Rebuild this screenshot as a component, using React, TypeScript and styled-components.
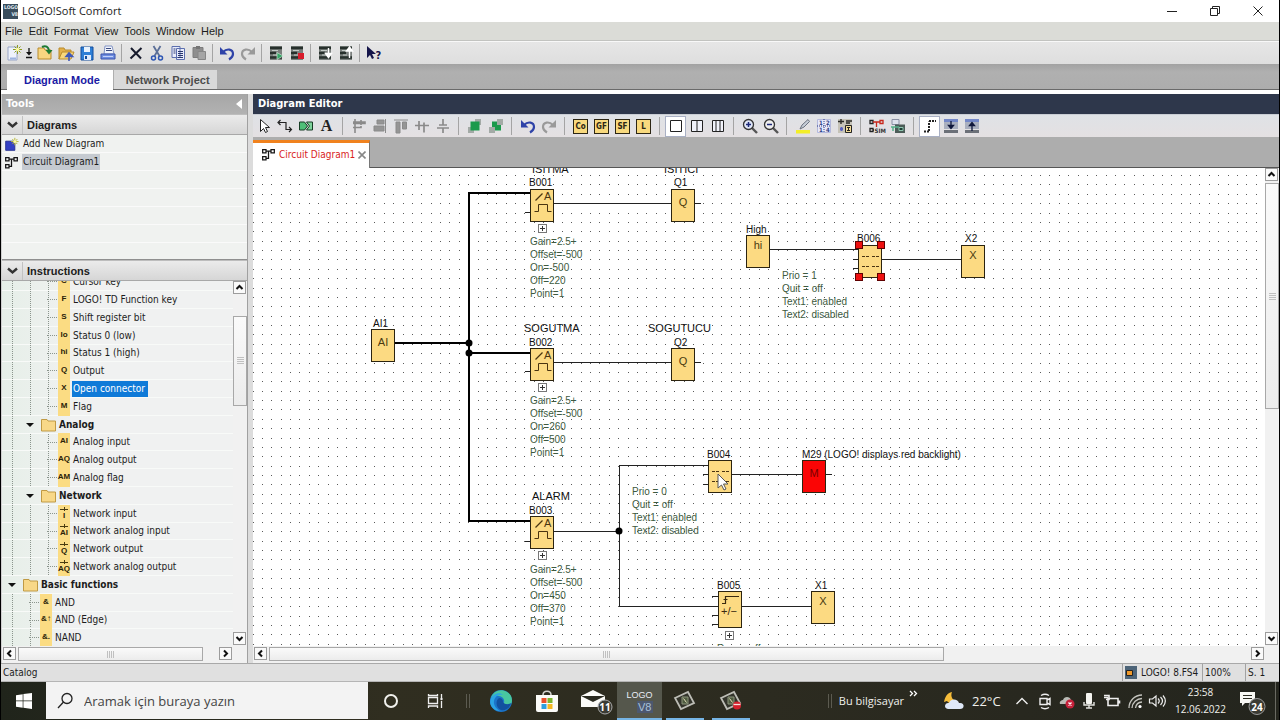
import React from 'react';
import styled, { createGlobalStyle, css } from 'styled-components';

const ui = '"DejaVu Sans Condensed", "DejaVu Sans", sans-serif';
const arial = '"Liberation Sans", Arial, sans-serif';
const segoe = '"Open Sans", "Noto Sans", sans-serif';

const GlobalStyle = createGlobalStyle`
  *, *::before, *::after { box-sizing: border-box; }
  body { margin: 0; background: #000; color: #1c1c1c; font-family: ${ui}; font-size: 10px; }
  button { margin: 0; padding: 0; border: 0; background: none; color: inherit; font: inherit; }
  ul { margin: 0; padding: 0; list-style: none; }
  svg { display: block; flex: none; }
`;

const Screen = styled.div`
  display: flex;
  flex-direction: column;
  height: 100vh;
  min-height: 480px;
  overflow: hidden;
`;

const AppWindow = styled.main`
  flex: 1;
  min-height: 0;
  display: flex;
  flex-direction: column;
  margin: 0 1px;
  background: #f2f2f2;
`;

const TitleBar = styled.header`
  display: flex;
  align-items: center;
  height: 22px;
  flex: none;
  padding-left: 2px;
  gap: 4px;
  background: #fff;
  font: 11px/20px ${segoe};
`;

const Caption = styled.h1`
  flex: 1;
  margin: 0;
  font-size: 11px;
  font-weight: 400;
`;

const WindowButtons = styled.div`
  display: flex;
`;

const WindowButton = styled.button`
  display: grid;
  place-items: center;
  width: 43px;
  height: 20px;
`;

const MenuBar = styled.nav`
  display: flex;
  align-items: center;
  gap: 6px;
  height: 19px;
  flex: none;
  padding-left: 4px;
  background: #dbdcd7;
  border-bottom: 1px solid #c2c3c0;
  font: 11px/16px ${arial};
`;

const Toolbar = styled.div<{ $sep: number }>`
  display: flex;
  align-items: center;
  height: 23px;
  flex: none;
  padding-left: 2px;
  background: linear-gradient(#e6e6e6, #dedede);
  border-top: 1px solid #f8f8f8;
  --sep: ${(p) => p.$sep}px;
`;

const EditorToolbar = styled(Toolbar)`
  padding-left: 0;
  background: linear-gradient(#dfe2e6, #e4e0e2);
  border-top: 1px solid #c9cdd4;
`;

const ToolButton = styled.button<{ $narrow?: boolean; $on?: boolean }>`
  display: grid;
  place-items: center;
  width: ${(p) => (p.$narrow ? 10 : 21)}px;
  height: 21px;
  flex: none;
  ${(p) => p.$on && css`background: #fff; border: 1px solid #a9b0c4;`}
`;

const Separator = styled.span`
  width: var(--sep);
  height: 18px;
  flex: none;
  background: linear-gradient(#a4a4a4, #a4a4a4) center / 1px 100% no-repeat;
`;

const ModeBar = styled.div`
  display: flex;
  align-items: flex-end;
  gap: 1px;
  height: 26px;
  flex: none;
  padding-left: 6px;
  background: linear-gradient(#a2a2a2, #b0b0b0 8px, #adadad);
  border-bottom: 1px solid #6a6a6a;
`;

const ModeTab = styled.button<{ $on?: boolean }>`
  height: ${(p) => (p.$on ? 20 : 19)}px;
  margin-bottom: ${(p) => (p.$on ? -1 : 0)}px;
  padding: 0 ${(p) => (p.$on ? 13 : 7)}px 0 ${(p) => (p.$on ? 17 : 12)}px;
  background: ${(p) => (p.$on ? '#fff' : '#d9d9d9')};
  color: ${(p) => (p.$on ? '#1a1aa4' : '#4c4c4c')};
  font: bold 11px/18px ${arial};
`;

const Work = styled.div`
  flex: 1;
  min-height: 0;
  display: flex;
  gap: 5px;
  padding-top: 4px;
  background: linear-gradient(#fff 4px, #dcdcdc 4px);
`;

const Side = styled.aside`
  display: flex;
  flex-direction: column;
  width: 247px;
  flex: none;
  border-right: 1px solid #a0a0a0;
  border-left: 1px solid #d0d0d0;
`;

const PanelTitle = styled.h2<{ $dark?: boolean }>`
  display: flex;
  align-items: center;
  justify-content: space-between;
  height: 20px;
  flex: none;
  margin: 0;
  padding: 0 5px 0 ${(p) => (p.$dark ? 5 : 4)}px;
  background: ${(p) => (p.$dark ? '#2e374b' : 'linear-gradient(#a6a6a6, #b2b2b2)')};
  color: #fff;
  font: bold 11px/20px ${ui};
`;

const SectionTitle = styled.h3`
  display: flex;
  align-items: center;
  height: 21px;
  flex: none;
  margin: 0;
  background: linear-gradient(#ebebeb, #d6d6d6);
  border-top: 1px solid #bdbdbd;
  border-bottom: 1px solid #a8a8a8;
  font: bold 11px/18px ${arial};
  svg { margin: 0 3px 0 4px; }
  span { padding-left: 4px; border-left: 1px solid #c2c2c2; }
`;

const DiagramList = styled.ul`
  height: 125px;
  flex: none;
  background: repeating-linear-gradient(#f0f2f0 0 17px, #fafafa 17px 18px);
  border-bottom: 1px solid #8f8f8f;
`;

const DiagramItem = styled.li<{ $on?: boolean }>`
  display: flex;
  align-items: center;
  gap: 3px;
  height: 18px;
  padding-left: 2px;
  span {
    padding: 0 1px;
    line-height: 16px;
    background: ${(p) => (p.$on ? '#c5cad0' : 'transparent')};
  }
`;

const TreeArea = styled.div`
  flex: 1;
  min-height: 0;
  display: flex;
`;

const TreeClip = styled.div`
  flex: 1;
  overflow: hidden;
  background: linear-gradient(90deg, #e6efe8, #f0f1f1 70px);
`;

const Tree = styled.ul`
  margin-top: -8px;
`;

/* Every fifth row is one pixel shorter, as in a list scaled below 100 %. */
const TreeRow = styled.li<{ $depth: number; $bold?: boolean }>`
  display: flex;
  align-items: center;
  height: 18px;
  padding-left: ${(p) => p.$depth * 18 + 2}px;
  border-bottom: 1px solid #f8faf8;
  font-weight: ${(p) => (p.$bold ? 700 : 400)};
  white-space: nowrap;
  background: ${(p) => [1, 2, 3].filter((n) => n <= p.$depth).map((n) =>
    `repeating-linear-gradient(#8b958d 0 1px, #0000 1px 2px) ${n * 18 - 8}px 0 / 1px 100% no-repeat`).join(',') || 'none'};
  &:nth-child(5n) { height: 17px; }
`;

const Branch = styled.span`
  width: 10px;
  margin-left: -11px;
  margin-right: 1px;
  border-top: 1px dotted #8b958d;
`;

const Chip = styled.span<{ $low?: boolean }>`
  width: 12px;
  height: 18px;
  flex: none;
  margin-right: 2px;
  background: #fbdc83;
  color: #2a2208;
  font: bold 8px/${(p) => (p.$low ? 22 : 16)}px ${arial};
  text-align: center;
  display: flex;
  justify-content: center;
  position: relative;
  ${(p) => p.$low && css`
    &::before { content: ''; position: absolute; left: 2px; right: 2px; top: 4px; border-top: 1px solid #4a3c10; }
    &::after { content: ''; position: absolute; left: 6px; top: 2px; height: 4px; border-left: 1px solid #4a3c10; }
  `}
`;

const RowText = styled.span<{ $on?: boolean; $folder?: boolean }>`
  padding: 0 3px 0 1px;
  line-height: 16px;
  background: ${(p) => (p.$on ? '#0f7ad8' : 'transparent')};
  color: ${(p) => (p.$on ? '#fff' : 'inherit')};
`;

const Scroll = styled.div<{ $v?: boolean }>`
  display: flex;
  flex: none;
  flex-direction: ${(p) => (p.$v ? 'column' : 'row')};
  ${(p) => (p.$v ? 'width: 14px; padding: 0 0 1px;' : 'height: 17px; padding: 1px 15px 2px 1px;')}
  gap: 2px;
  background: #f1f1f1;
`;

const ScrollButton = styled.button`
  display: grid;
  place-items: center;
  width: 13px;
  height: 13px;
  flex: none;
  background: #fafafa;
  border: 1px solid #9c9c9c;
`;

const Track = styled.div<{ $v?: boolean }>`
  flex: 1;
  display: flex;
  flex-direction: ${(p) => (p.$v ? 'column' : 'row')};
`;

const Space = styled.span<{ $grow: number }>`
  flex: ${(p) => p.$grow} 0 0;
`;

const Thumb = styled.div<{ $grow: number }>`
  flex: ${(p) => p.$grow} 0 0;
  display: grid;
  place-items: center;
  background: linear-gradient(#fafafa, #ececec);
  border: 1px solid #a8a8a8;
`;

const Grip = styled.span<{ $v?: boolean }>`
  width: 7px;
  height: 7px;
  background: repeating-linear-gradient(${(p) => (p.$v ? '180deg' : '90deg')}, #c0c0c0 0 1px, #0000 1px 2px);
`;

const Editor = styled.section`
  flex: 1;
  min-width: 0;
  display: flex;
  flex-direction: column;
`;

const FileTabs = styled.div`
  display: flex;
  align-items: flex-end;
  height: 31px;
  flex: none;
  background: #adadad;
  border-bottom: 1px solid #555;
`;

const FileTab = styled.button`
  display: flex;
  align-items: center;
  height: 28px;
  margin-bottom: -1px;
  padding: 0 3px 2px 8px;
  gap: 3px;
  background: #fff;
  border-top: 3px solid #f0821e;
  border-right: 1px solid #777;
  color: #d9221c;
`;

const CanvasArea = styled.div`
  flex: 1;
  min-height: 0;
  display: flex;
`;

const Canvas = styled.div`
  position: relative;
  flex: 1;
  min-width: 0;
  overflow: hidden;
  background: #fff;
  color: #111;
  font: 10px/13px ${arial};
`;

const Wires = styled.svg`
  position: absolute;
  left: 0;
  top: 0;
`;

const At = styled.div<{ $x: number; $y: number }>`
  position: absolute;
  left: ${(p) => p.$x}px;
  top: ${(p) => p.$y}px;
  white-space: nowrap;
`;

const Block = styled(At)<{ $red?: boolean; $high?: boolean; $h?: number }>`
  width: 24px;
  height: ${(p) => p.$h ?? 33}px;
  border: 1px solid #2c2410;
  background: ${(p) => (p.$red ? '#fb0505' : '#fcda82')};
  color: ${(p) => (p.$red ? '#7a0000' : '#4a3a10')};
  font-size: 11px;
  line-height: ${(p) => (p.$high ? 18 : 24)}px;
  text-align: center;
`;

const Comment = styled(At)`
  font-size: 11px;
`;

const Params = styled(At)`
  color: #3d5a40;
`;

const PlusBox = styled(At).attrs({ as: 'button' })`
  display: grid;
  place-items: center;
  width: 9px;
  height: 9px;
  background: #fff;
  border: 1px solid #777;
`;

const Handle = styled(At)`
  width: 8px;
  height: 8px;
  background: #ee1010;
  border: 1px solid #5e0000;
`;

const StatusBar = styled.footer`
  display: flex;
  align-items: center;
  height: 19px;
  flex: none;
  padding-left: 2px;
  background: #e0e0e0;
  border-top: 1px solid #a9a9a9;
  border-bottom: 1px solid #b5b5b5;
`;

const StatusText = styled.span`
  flex: 1;
`;

const StatusCell = styled.span<{ $w: number }>`
  display: flex;
  align-items: center;
  gap: 4px;
  width: ${(p) => p.$w}px;
  height: 17px;
  padding-left: 2px;
  border-left: 1px solid #a2a2a2;
  white-space: nowrap;
`;

const Taskbar = styled.footer`
  display: flex;
  height: 38px;
  flex: none;
  margin: 0 1px;
  background: linear-gradient(90deg, #20241b, #302e20 30%, #2c2b20 60%, #24251e);
  color: #f0f0ec;
  font: 12px/16px ${segoe};
`;

const TaskButton = styled.button<{ $w?: number; $open?: boolean; $on?: boolean }>`
  position: relative;
  display: grid;
  place-items: center;
  width: ${(p) => p.$w ?? 46}px;
  flex: none;
  ${(p) => p.$on && css`background: #55574c;`}
  &::after {
    content: '';
    position: absolute;
    left: ${(p) => (p.$on ? 0 : 4)}px;
    right: ${(p) => (p.$on ? 0 : 4)}px;
    bottom: 0;
    height: ${(p) => (p.$open ? 2 : 0)}px;
    background: #76b5e6;
  }
`;

const SearchBox = styled.label`
  display: flex;
  align-items: center;
  gap: 10px;
  width: 322px;
  height: 37px;
  flex: none;
  padding-left: 10px;
  background: #f3f3f3;
  input {
    flex: 1;
    min-width: 0;
    border: 0;
    padding: 0;
    outline: 0;
    background: none;
    font: 13px/20px ${segoe};
  }
  input::placeholder { color: #444; opacity: 1; }
`;

const TaskDivider = styled.span<{ $w: number }>`
  width: ${(p) => p.$w}px;
  flex: none;
  background:
    linear-gradient(#5c5b50, #5c5b50) calc(50% - 1px) center / 1px 14px no-repeat,
    linear-gradient(#5c5b50, #5c5b50) calc(50% + 2px) center / 1px 14px no-repeat;
`;

const ShowDesktop = styled.button`
  width: 4px;
  flex: none;
  border-left: 1px solid #6a6a62;
`;

const Grow = styled.span`
  flex: 1;
`;

const Gap = styled.span`
  width: 15px;
  flex: none;
`;

const TaskLabel = styled.span<{ $w: number; $size: number }>`
  width: ${(p) => p.$w}px;
  flex: none;
  align-self: center;
  font-size: ${(p) => p.$size}px;
  white-space: nowrap;
`;

const Clock = styled.time`
  display: flex;
  flex-direction: column;
  justify-content: center;
  width: 65px;
  flex: none;
  font-size: 10px;
  line-height: 17px;
  text-align: center;
`;

const AppBadge = styled.span`
  display: flex;
  flex-direction: column;
  width: 15px;
  height: 15px;
  flex: none;
  background: #3a4d5c;
  color: #dfe8f0;
  font: bold 5px/7px ${ui};
  text-align: right;
`;

const LogoMark = styled.span`
  display: flex;
  flex-direction: column;
  align-items: flex-end;
  gap: 1px;
  color: #e8eef6;
  font: 9px/10px ${arial};
  em {
    padding: 0 1px;
    background: #4c5870;
    color: #a9c0d8;
    font-style: normal;
    font-size: 11px;
    line-height: 12px;
  }
`;

type IconProps = { size?: number; children: React.ReactNode };
const Svg = ({ size = 18, children }: IconProps) => (
  <svg width={size} height={size} viewBox="0 0 18 18" fill="none" aria-hidden="true">{children}</svg>
);

const moduleRack = (
  <>
    <path d="M3 2h12v14H3z" fill="#7b807e" />
    <path d="M3 4h12M3 9h6M3 13.500h12" stroke="#27302c" strokeWidth="2.400" />
    <path d="M5 6.500h6M6 11h4" stroke="#c3cac6" />
  </>
);

const circuit = (
  <path d="M2 3h4v4H2zM2 11.500h4v4H2zM12 3h4v4h-4zM6 5h6M9 5v8.500H6" stroke="#151515" strokeWidth="1.500" />
);

const icons: Record<string, React.ReactNode> = {
  new: (
    <>
      <path d="M3 3h9v13H3z" fill="#eef2fb" stroke="#98a5c8" />
      <path d="M5 14.500h6" stroke="#9db3e0" strokeWidth="2" />
      <path d="M12.500 1v9M8 5.500h9M9.500 2.500l6 6M15.500 2.500l-6 6" stroke="#8c9a1c" />
      <circle cx="12.500" cy="5.500" r="1.800" fill="#fdfba0" />
    </>
  ),
  open: (
    <>
      <path d="M2 4h6l1 2h6v9H2z" fill="#f7d680" stroke="#b98b2c" />
      <path d="M6 3c4-2 6 0 7 3" stroke="#1c7a34" strokeWidth="2" />
      <path d="M9.500 6h7L13 10.500z" fill="#1c7a34" />
    </>
  ),
  folder: (
    <>
      <path d="M2 4h5l1 2h6v3H5l-3 6z" fill="#e4b04a" stroke="#b98b2c" />
      <path d="M2 15l3-7h12l-3 7z" fill="#f8d77c" stroke="#b98b2c" />
      <path d="M12 17v-5M9 12.500L12 9l3.500 3.500z" stroke="#4159b8" strokeWidth="1.600" fill="#4159b8" />
    </>
  ),
  save: (
    <>
      <path d="M3 3h12v13H3z" fill="#2e7fd6" stroke="#134d9c" />
      <path d="M6 3h6v5H6z" fill="#e8f2fd" />
      <path d="M6 11h7v5H6z" fill="#dfeafa" />
      <path d="M7 12h2v3H7z" fill="#134d9c" />
    </>
  ),
  print: (
    <>
      <path d="M6 2h7l2 8H5z" fill="#f2f5fc" stroke="#8294c4" />
      <path d="M7 4.500h5M7 6.500h6" stroke="#3a4a80" />
      <path d="M2 10h14v5H2z" fill="#6f8ee0" stroke="#3b53ac" />
      <path d="M4 12.500h10" stroke="#c3d1fa" />
    </>
  ),
  del: <path d="M4 4l10 10.500M14.500 4L3.500 14.500" stroke="#161a2c" strokeWidth="2" />,
  cut: (
    <>
      <path d="M5.500 2l6 10M12.500 2l-6 10" stroke="#5b6f98" strokeWidth="1.800" />
      <circle cx="5.500" cy="14" r="2" stroke="#2d56b4" strokeWidth="1.500" />
      <circle cx="12.500" cy="14" r="2" stroke="#2d56b4" strokeWidth="1.500" />
    </>
  ),
  copy: (
    <>
      <path d="M3 2.500h8v11H3zM7.500 4.500h8v11h-8z" fill="#e8ecfb" stroke="#5c6fae" />
      <path d="M4.500 5h2M4.500 7h2M4.500 9h2M9 7.500h5M9 9.500h5M9 11.500h5M9 13.500h5" stroke="#28366e" />
    </>
  ),
  paste: (
    <>
      <path d="M3 3.500h10v10H3z" fill="#8e8e8e" stroke="#7c7c7c" />
      <path d="M6 2h4v3H6z" fill="#757575" />
      <path d="M8 7.500h7.500v8H8z" fill="#a5a5a5" stroke="#868686" />
    </>
  ),
  undo: (
    <>
      <path d="M5 8c4-4 10-3 10 2 0 2-1.500 4-4 5.500" stroke="#2f43a8" strokeWidth="2.200" />
      <path d="M2 3v7.500h7.500z" fill="#2f43a8" />
    </>
  ),
  redo: (
    <>
      <path d="M13 8C9 4 3 5 3 10c0 2 1.500 4 4 5.500" stroke="#9a9a9a" strokeWidth="2.200" />
      <path d="M16 3v7.500H8.500z" fill="#9a9a9a" />
    </>
  ),
  start: <>{moduleRack}<path d="M10 8.500l6 3.500-6 3.500z" fill="#35a565" stroke="#dff0e4" strokeWidth=".6" /></>,
  stop: <>{moduleRack}<path d="M10 9h6v6h-6z" fill="#d81c2c" /></>,
  download: <>{moduleRack}<path d="M12.500 4v7M9.500 9.500h6l-3 4z" stroke="#fff" strokeWidth="1.400" fill="#fff" /></>,
  upload: <>{moduleRack}<path d="M12.500 14V6M9.500 7h6l-3-4z" stroke="#fff" strokeWidth="1.400" fill="#fff" /></>,
  help: (
    <>
      <path d="M2 2v12l3-3 2 4 2-1-2-4h4z" fill="#15154a" />
      <text x="10.500" y="15" fill="#15154a" fontSize="11" fontWeight="700">?</text>
    </>
  ),
  pointer: <path d="M5.500 2.500v12l3-3 2 4 2-1-2-4h4z" fill="#fff" stroke="#222" />,
  wire: (
    <>
      <path d="M3 5.500h7v7h5" stroke="#222" strokeWidth="1.200" />
      <path d="M4.500 3L2 5.500 4.500 8M13 10l2.500 2.500L13 15" stroke="#222" strokeWidth="1.200" />
    </>
  ),
  connector: (
    <>
      <path d="M2.500 5h5l3 4-3 4h-5z" fill="#4fbf78" stroke="#173d24" />
      <path d="M9.500 5h6v8h-6l3-4z" fill="#7fd39c" stroke="#173d24" />
    </>
  ),
  alignL: <path d="M5 2v14M3 5h12v1.500H3M3 10.500h8V9M11 3v5" stroke="#8a8a8a" strokeWidth="1.600" />,
  alignR: <path d="M6 3h7v4H6zM3 9h10v5H3zM14.500 2v14" fill="#959595" stroke="#8a8a8a" />,
  alignT: <path d="M2 3h14M4 5h4v11H4zM10.500 5h4v7h-4z" fill="#959595" stroke="#8a8a8a" />,
  alignM: <path d="M2 8.500h14M6 4v9M11 5.500v10" stroke="#8a8a8a" strokeWidth="1.700" />,
  alignC: <path d="M9 2v6M5 8h8M3 11h12M9 11v5" stroke="#8a8a8a" strokeWidth="1.700" />,
  front: (
    <>
      <path d="M9 2h6v6H9zM2 10h6v6H2z" fill="#a3aaa6" />
      <path d="M4.500 4.500h9v9h-9z" fill="#1b9a4c" />
    </>
  ),
  back: (
    <>
      <path d="M5 4.500h7v3h2v6H8v-3H5z" fill="#1b9a4c" />
      <path d="M10 2h6v6h-6zM2 10h6v6H2z" fill="#a3aaa6" />
    </>
  ),
  one: <path d="M3.500 3.500h11v11h-11z" stroke="#222" fill="#fff" />,
  two: <path d="M3.500 3.500h11v11h-11zM9 3.500v11" stroke="#222" fill="#f1f3fb" />,
  three: <path d="M3.500 3.500h11v11h-11zM7 3.500v11M11 3.500v11" stroke="#222" fill="#f1f3fb" />,
  zoomIn: (
    <>
      <path d="M11 11l5 5" stroke="#555" strokeWidth="2.400" />
      <circle cx="7.500" cy="7.500" r="5" fill="#dfe6f7" stroke="#333" strokeWidth="1.300" />
      <path d="M5 7.500h5M7.500 5v5" stroke="#1c2878" strokeWidth="1.500" />
    </>
  ),
  zoomOut: (
    <>
      <path d="M11 11l5 5" stroke="#555" strokeWidth="2.400" />
      <circle cx="7.500" cy="7.500" r="5" fill="#eee" stroke="#333" strokeWidth="1.300" />
      <path d="M5 7.500h5" stroke="#1c2878" strokeWidth="1.500" />
    </>
  ),
  marker: (
    <>
      <path d="M2 13h14v3.500H2z" fill="#f3ee28" />
      <path d="M6 12l2-4 6-5.500 1.500 2L10 10z" fill="#c5ccd6" stroke="#6a7280" />
    </>
  ),
  numbers: (
    <>
      <path d="M2.500 2.500h13v13h-13z" fill="#e6e9f8" stroke="#b4b9dc" />
      <path d="M9 2v14M2 9h14" stroke="#303c86" strokeDasharray="1 1" />
      <g fill="#303c86" fontSize="6" fontWeight="700">
        <text x="4" y="8">1</text><text x="11" y="8">2</text>
        <text x="4" y="15">1</text><text x="11" y="15">4</text>
      </g>
    </>
  ),
  props: (
    <>
      <path d="M2 2h14v14H2z" fill="#c6c3b8" />
      <path d="M2 4.500h6M5 2v5M10 4h6M10 6h4" stroke="#2a2a26" strokeWidth="1.400" />
      <path d="M4 12h3M5.500 10v4" stroke="#5a62c0" strokeWidth="2" />
      <path d="M9.500 8.500h6v7h-6z" fill="#f3dc98" stroke="#222" />
      <path d="M11 10.500h3M12.500 10.500v3M11 13.500h3" stroke="#222" />
    </>
  ),
  sim: (
    <>
      <path d="M2 3.500h3v3H2zM2 11.500h3v3H2zM5 13h1" stroke="#222" strokeWidth="1.300" />
      <path d="M5 5h7M12 3.500h3v3h-3zM8.500 5v5" stroke="#c8281c" strokeWidth="1.300" />
      <text x="6.500" y="16" fill="#333" fontSize="6" fontWeight="700">SIM</text>
    </>
  ),
  online: (
    <>
      <path d="M3 2.500h7v5H3z" fill="#dfe3ee" stroke="#8a90a4" />
      <path d="M6 7.500h10V16H6z" fill="#4c5c58" />
      <path d="M2 10h8M4 10v4" stroke="#56b08a" strokeWidth="1.500" />
      <path d="M10 10.500h4v3h-4z" fill="#1d3e34" stroke="#8ec5ae" />
    </>
  ),
  route: <path d="M3 14.500h5M8 14V4.500M8 4h7" stroke="#222" strokeWidth="2" strokeDasharray="2 1" />,
  expand: (
    <>
      <path d="M2 2h14v3H2z" fill="#7387c8" />
      <path d="M2 5h14v7H2z" fill="#a9afbf" />
      <path d="M2 13h14v3H2z" fill="#6c7078" />
      <path d="M9 4v6M6.500 8.500h5L9 11.500z" stroke="#10183c" strokeWidth="1.300" fill="#10183c" />
    </>
  ),
  collapse: (
    <>
      <path d="M2 2h14v3H2z" fill="#7387c8" />
      <path d="M2 5h14v7H2z" fill="#a9afbf" />
      <path d="M2 13h14v3H2z" fill="#6c7078" />
      <path d="M9 14V7M6.500 8.500h5L9 5.500z" stroke="#10183c" strokeWidth="1.300" fill="#10183c" />
    </>
  ),
  addDiagram: (
    <>
      <path d="M2 5h11v11H2z" fill="#3440c4" stroke="#1f2a8c" />
      <path d="M13 1v9M8.500 5.500h9M10 2.500l6 6M16 2.500l-6 6" stroke="#b9b83a" strokeWidth="1.200" />
      <circle cx="13" cy="5.500" r="1.800" fill="#fdfba0" />
    </>
  ),
  yfolder: <path d="M1.500 3.500h5.500l1 1.500h7.500v10h-14z" fill="#f8d888" stroke="#c09a44" />,
};

const FbBadge = styled.span`
  width: 15px;
  height: 15px;
  background: #f8d97e;
  border: 1px solid #2c2614;
  color: #2c2614;
  font: bold 8px/13px ${ui};
  text-align: center;
`;

const Letter = styled.span`
  font: bold 16px/18px "Liberation Serif", serif;
  color: #222;
`;

const mainTools: string[][] = [
  ['new', 'down', 'open', 'folder', 'save', 'print'],
  ['del', 'cut', 'copy', 'paste'],
  ['undo', 'redo'],
  ['start', 'stop'],
  ['download', 'upload'],
  ['help'],
];
const editorTools: string[][] = [
  ['pointer', 'wire', 'connector', 'text:A'],
  ['alignL', 'alignR', 'alignT', 'alignM', 'alignC'],
  ['front', 'back'],
  ['undo', 'redo'],
  ['fb:Co', 'fb:GF', 'fb:SF', 'fb:L'],
  ['one', 'two', 'three'],
  ['zoomIn', 'zoomOut'],
  ['marker', 'numbers', 'props'],
  ['sim', 'online'],
  ['route', 'expand', 'collapse'],
];

const face = (t: string) => {
  if (t.startsWith('text:')) return <Letter>{t.slice(5)}</Letter>;
  if (t.startsWith('fb:')) return <FbBadge>{t.slice(3)}</FbBadge>;
  if (t === 'down') {
    return (
      <svg width="10" height="14" viewBox="0 0 10 14" fill="none">
        <path d="M2 6h6L5 9.500z" fill="#111" />
        <path d="M5 2v5M2 11.500h6" stroke="#111" strokeWidth="1.300" />
      </svg>
    );
  }
  return <Svg>{icons[t]}</Svg>;
};

const ToolGroups = ({ groups }: { groups: string[][] }) => (
  <>
    {groups.map((g, i) => (
      <React.Fragment key={i}>
        {i > 0 && <Separator />}
        {g.map((t) => (
          <ToolButton key={t} aria-label={t} $narrow={t === 'down'} $on={t === 'one' || t === 'route'}>{face(t)}</ToolButton>
        ))}
      </React.Fragment>
    ))}
  </>
);

const arrows: Record<string, string> = {
  up: 'M1.500 6l3-3 3 3',
  down: 'M1.500 3l3 3 3-3',
  left: 'M6 1.500l-3 3 3 3',
  right: 'M3 1.500l3 3-3 3',
};
const Arrow = ({ dir }: { dir: string }) => (
  <ScrollButton aria-label={`Scroll ${dir}`}>
    <svg width="9" height="9" viewBox="0 0 9 9" fill="none"><path d={arrows[dir]} stroke="#111" strokeWidth="2" /></svg>
  </ScrollButton>
);

const ScrollBar = ({ v, before, thumb, after }: { v?: boolean; before: number; thumb: number; after: number }) => (
  <Scroll $v={v}>
    <Arrow dir={v ? 'up' : 'left'} />
    <Track $v={v}>
      <Space $grow={before} />
      <Thumb $grow={thumb}><Grip $v={v} /></Thumb>
      <Space $grow={after} />
    </Track>
    <Arrow dir={v ? 'down' : 'right'} />
  </Scroll>
);

type Row = { d: number; t: string; c?: string; low?: boolean; on?: boolean };
const rows: Row[] = [
  { d: 3, t: 'Cursor key', c: 'C' },
  { d: 3, t: 'LOGO! TD Function key', c: 'F' },
  { d: 3, t: 'Shift register bit', c: 'S' },
  { d: 3, t: 'Status 0 (low)', c: 'lo' },
  { d: 3, t: 'Status 1 (high)', c: 'hi' },
  { d: 3, t: 'Output', c: 'Q' },
  { d: 3, t: 'Open connector', c: 'X', on: true },
  { d: 3, t: 'Flag', c: 'M' },
  { d: 1, t: 'Analog' },
  { d: 3, t: 'Analog input', c: 'AI' },
  { d: 3, t: 'Analog output', c: 'AQ' },
  { d: 3, t: 'Analog flag', c: 'AM' },
  { d: 1, t: 'Network' },
  { d: 3, t: 'Network input', c: 'I', low: true },
  { d: 3, t: 'Network analog input', c: 'AI', low: true },
  { d: 3, t: 'Network output', c: 'Q', low: true },
  { d: 3, t: 'Network analog output', c: 'AQ', low: true },
  { d: 0, t: 'Basic functions' },
  { d: 2, t: 'AND', c: '&' },
  { d: 2, t: 'AND (Edge)', c: '&↑' },
  { d: 2, t: 'NAND', c: '&.' },
];

const Chevron = () => (
  <svg width="13" height="9" viewBox="0 0 13 9" fill="none"><path d="M2 2.500l4.500 4 4.500-4" stroke="#333" strokeWidth="2.400" /></svg>
);

const Twisty = () => (
  <svg width="18" height="8" viewBox="0 0 18 8"><path d="M4 2h8L8 6z" fill="#111" /></svg>
);

const PITCH = 9.375;
const gridPath = (() => {
  let d = '';
  for (let j = 0; j < 110; j++) {
    const y = Math.floor(7.5 + j * PITCH);
    for (let i = 0; i < 240; i++) d += `M${Math.floor(i * PITCH)} ${y}h1v1h-1z`;
  }
  return d;
})();

const thickWires = 'M141 175h75M216 25v328M215 25h62M216 185h61M215 353h62';
const thinWires = [
  'M301 35.500h117M442 35.500h6M272 44.500h5',
  'M301 194.500h117M442 194.500h6M272 203.500h5',
  'M301 363.500h65M272 373.500h5M366.500 297.500v141M366 297.500h89M366 438.500h99',
  'M450 306.500h5M450 316.500h5M479 306.500h70M573 306.500h6',
  'M459 428.500h6M459 447.500h6M459 456.500h6M488 438.500h70',
  'M517 81.500h88M600 91.500h5M600 100.500h5M629 91.500h79',
].join('');

const ThresholdGlyph = () => (
  <svg width="22" height="31" viewBox="0 0 22 31" fill="none">
    <path d="M4.500 10.500l7-7" stroke="#4a3410" strokeWidth="1.200" />
    <path d="M3.500 21.500h4v-7h9v7h4" stroke="#4a3410" />
    <text x="13" y="10" fill="#4a3410" fontSize="11">A</text>
  </svg>
);
const MessageGlyph = () => (
  <svg width="22" height="31" viewBox="0 0 22 31" fill="none">
    <path d="M3 10.500h17M3 20.500h17" stroke="#4a3410" strokeDasharray="3 1 3 3" />
  </svg>
);
const CounterGlyph = () => (
  <svg width="22" height="35" viewBox="0 0 22 35" fill="none">
    <path d="M3 11.500h3.500v-7H20M4.500 7.500h4" stroke="#3a2a10" strokeWidth="1.200" />
    <text x="2" y="23" fill="#3a2a10" fontSize="11">+/−</text>
  </svg>
);
const Plus = () => (
  <svg width="5" height="5" viewBox="0 0 5 5"><path d="M0 2.500h5M2.500 0v5" stroke="#333" /></svg>
);

const labels: [number, number, string][] = [
  [276, 8, 'B001'], [421, 8, 'Q1'], [120, 149, 'AI1'], [276, 168, 'B002'], [421, 168, 'Q2'],
  [276, 336, 'B003'], [454, 280, 'B004'], [549, 280, 'M29 (LOGO! displays red backlight)'],
  [464, 411, 'B005'], [562, 411, 'X1'], [493, 55, 'High'], [604, 64, 'B006'], [712, 64, 'X2'],
];
const comments: [number, number, string][] = [
  [279, -5, 'ISITMA'], [411, -5, 'ISITICI'], [271, 154, 'SOGUTMA'], [395, 154, 'SOGUTUCU'], [279, 322, 'ALARM'],
];
const params: [number, number, string[]][] = [
  [277, 67, ['Gain=2.5+', 'Offset=-500', 'On=-500', 'Off=220', 'Point=1']],
  [277, 226, ['Gain=2.5+', 'Offset=-500', 'On=260', 'Off=500', 'Point=1']],
  [277, 395, ['Gain=2.5+', 'Offset=-500', 'On=450', 'Off=370', 'Point=1']],
  [529, 101, ['Prio = 1', 'Quit = off', 'Text1: enabled', 'Text2: disabled']],
  [379, 317, ['Prio = 0', 'Quit = off', 'Text1: enabled', 'Text2: disabled']],
  [464, 474, ['Rem = off']],
];
type BlockSpec = { x: number; y: number; f: React.ReactNode; red?: boolean; high?: boolean; h?: number };
const blocks: BlockSpec[] = [
  { x: 277, y: 21, f: <ThresholdGlyph /> },
  { x: 277, y: 180, f: <ThresholdGlyph /> },
  { x: 277, y: 348, f: <ThresholdGlyph /> },
  { x: 418, y: 21, f: 'Q' },
  { x: 418, y: 180, f: 'Q' },
  { x: 118, y: 161, f: 'AI' },
  { x: 493, y: 67, f: 'hi', high: true },
  { x: 605, y: 77, f: <MessageGlyph /> },
  { x: 708, y: 77, f: 'X', high: true },
  { x: 455, y: 292, f: <MessageGlyph /> },
  { x: 549, y: 292, f: 'M', red: true },
  { x: 465, y: 423, f: <CounterGlyph />, h: 37 },
  { x: 558, y: 423, f: 'X', high: true },
];

const tray: { w: number; label: string; icon: React.ReactNode }[] = [
  { w: 22, label: 'Show hidden icons', icon: <path d="M3.500 12L9 6.500l5.500 5.500" stroke="#eee" strokeWidth="1.400" /> },
  { w: 23, label: 'Meet now', icon: <path d="M4 6.500h7v6H4zM11 8l3-1.500v6L11 11M5 3.500c2.500-1.500 5.500-1.500 8 0M5 15.500c2.500 1.500 5.500 1.500 8 0" stroke="#eee" strokeWidth="1.400" /> },
  {
    w: 22, label: 'OneDrive', icon: (
      <>
        <path d="M2 12c-1-3 2-4 3-4 1-4 7-4 8 0l2 4z" fill="#b9bbb6" />
        <circle cx="12" cy="12" r="4.500" fill="#c4203a" />
        <path d="M10.500 10.500l3 3M13.500 10.500l-3 3" stroke="#fff" strokeWidth="1.300" />
      </>
    ),
  },
  {
    w: 22, label: 'Microphone', icon: (
      <>
        <rect x="6" y="1" width="6" height="11" rx="1" fill="#f4f4f0" />
        <path d="M4 10v3h10v-3M9 13v3M6 16h6" stroke="#e4e4e0" strokeWidth="1.400" />
      </>
    ),
  },
  { w: 24, label: 'Battery', icon: <path d="M5 6.500h10v7H5zM16.500 8.500v3M1 3.500h5v4H3M1 5.500h4" stroke="#eee" strokeWidth="1.600" /> },
  {
    w: 22, label: 'Wi-Fi', icon: (
      <>
        <path d="M3 16A13 13 0 0 1 16 3M6 16A10 10 0 0 1 16 6.500M9.500 16A7 7 0 0 1 16 10" stroke="#c4c4be" strokeWidth="1.300" />
        <circle cx="14" cy="14.500" r="1.600" fill="#fff" />
      </>
    ),
  },
  { w: 22, label: 'Volume', icon: <path d="M1.500 7h3l3.500-3v10l-3.500-3h-3zM10 6.500c1.500 1.500 1.500 3.500 0 5M12.500 5c2.500 2.500 2.500 5.500 0 8M15 3.500c3 3.500 3 7.500 0 11" stroke="#eee" strokeWidth="1.200" /> },
];

const CameraFrame = ({ rec }: { rec?: boolean }) => (
  <svg width="24" height="24" viewBox="0 0 24 24" fill="none">
    <path d="M2 9l13-6 6 11-13 6z" fill="#33342b" stroke="#bdbdb6" strokeWidth="1.800" />
    <path d="M9 8h6v7H9z" fill="#4f5c40" stroke="#8d947c" />
    <path d="M10.500 9.500l3 4" stroke="#e9e4c0" />
    {rec && <><circle cx="18" cy="16.500" r="4" fill="#d3202c" /><path d="M14.500 15.500h7" stroke="#f6dcdc" strokeWidth="1.300" /></>}
  </svg>
);

export default function App() {
  return (
    <Screen>
      <GlobalStyle />
      <AppWindow>
        <TitleBar>
          <AppBadge><span>LOGO</span><span>V8</span></AppBadge>
          <Caption>LOGO!Soft Comfort</Caption>
          <WindowButtons>
            <WindowButton aria-label="Minimize"><svg width="10" height="10"><path d="M0 5.500h10" stroke="#222" /></svg></WindowButton>
            <WindowButton aria-label="Restore"><svg width="10" height="10" fill="none"><path d="M.5 2.500h7v7h-7zM2.500 2.500v-2h7v7h-2" stroke="#222" /></svg></WindowButton>
            <WindowButton aria-label="Close"><svg width="10" height="10"><path d="M.5.5l9 9M9.500.5l-9 9" stroke="#222" /></svg></WindowButton>
          </WindowButtons>
        </TitleBar>
        <MenuBar>
          {['File', 'Edit', 'Format', 'View', 'Tools', 'Window', 'Help'].map((m) => <button key={m}>{m}</button>)}
        </MenuBar>
        <Toolbar $sep={7}><ToolGroups groups={mainTools} /></Toolbar>
        <ModeBar>
          <ModeTab $on>Diagram Mode</ModeTab>
          <ModeTab>Network Project</ModeTab>
        </ModeBar>
        <Work>
          <Side>
            <PanelTitle>
              Tools
              <svg width="6" height="10" viewBox="0 0 6 10"><path d="M6 0v10L0 5z" fill="#fff" /></svg>
            </PanelTitle>
            <SectionTitle><Chevron /><span>Diagrams</span></SectionTitle>
            <DiagramList>
              <DiagramItem><Svg size={15}>{icons.addDiagram}</Svg><span>Add New Diagram</span></DiagramItem>
              <DiagramItem $on><Svg size={15}>{circuit}</Svg><span>Circuit Diagram1</span></DiagramItem>
            </DiagramList>
            <SectionTitle><Chevron /><span>Instructions</span></SectionTitle>
            <TreeArea>
              <TreeClip>
                <Tree>
                  {rows.map((r) => (
                    <TreeRow key={r.t} $depth={r.d} $bold={!r.c}>
                      {r.c ? <><Branch /><Chip $low={r.low}>{r.c}</Chip></> : <><Twisty /><Svg>{icons.yfolder}</Svg></>}
                      <RowText $on={r.on}>{r.t}</RowText>
                    </TreeRow>
                  ))}
                </Tree>
              </TreeClip>
              <ScrollBar v before={20} thumb={88} after={225} />
            </TreeArea>
            <ScrollBar before={0} thumb={183} after={14} />
          </Side>
          <Editor>
            <PanelTitle $dark>Diagram Editor</PanelTitle>
            <EditorToolbar $sep={11}><ToolGroups groups={editorTools} /></EditorToolbar>
            <FileTabs>
              <FileTab>
                <Svg size={15}>{circuit}</Svg>
                Circuit Diagram1
                <svg width="8" height="8" viewBox="0 0 8 8"><path d="M.5.5l7 7M7.500.5l-7 7" stroke="#888" strokeWidth="1.600" /></svg>
              </FileTab>
            </FileTabs>
            <CanvasArea>
              <Canvas>
                <Wires width="2250" height="1040" fill="none">
                  <path d={gridPath} fill="#5a5a5a" shapeRendering="crispEdges" />
                  <path d={thinWires} stroke="#222" />
                  <path d={thickWires} stroke="#000" strokeWidth="2" />
                  <circle cx="216" cy="175" r="3.500" fill="#000" />
                  <circle cx="216" cy="185" r="3.500" fill="#000" />
                  <circle cx="366" cy="363" r="3.500" fill="#000" />
                </Wires>
                {comments.map(([x, y, t]) => <Comment key={t} $x={x} $y={y}>{t}</Comment>)}
                {labels.map(([x, y, t]) => <At key={t} $x={x} $y={y}>{t}</At>)}
                {params.map(([x, y, lines]) => (
                  <Params key={`${x}-${y}`} $x={x} $y={y}>{lines.map((l) => <div key={l}>{l}</div>)}</Params>
                ))}
                {blocks.map((b) => <Block key={`${b.x}-${b.y}`} $x={b.x} $y={b.y} $red={b.red} $high={b.high} $h={b.h}>{b.f}</Block>)}
                {[[285, 56], [285, 215], [285, 383], [472, 463]].map(([x, y]) => (
                  <PlusBox key={y} $x={x} $y={y} aria-label="Expand parameters"><Plus /></PlusBox>
                ))}
                {[[602, 73], [624, 73], [602, 105], [624, 105]].map(([x, y]) => <Handle key={`${x}-${y}`} $x={x} $y={y} />)}
                <At $x={464} $y={305}>
                  <svg width="12" height="18" viewBox="0 0 12 18"><path d="M1 1v14l3.500-3 2.500 5 2-1-2.500-5H11z" fill="#fff" stroke="#555" /></svg>
                </At>
              </Canvas>
              <ScrollBar v before={0} thumb={226} after={222} />
            </CanvasArea>
            <ScrollBar before={0} thumb={675} after={306} />
          </Editor>
        </Work>
        <StatusBar>
          <StatusText>Catalog</StatusText>
          <StatusCell $w={80}>
            <svg width="12" height="13" viewBox="0 0 12 13"><path d="M0 0h12v13H0z" fill="#4d6478" /><path d="M1.500 4.500h6v5h-6z" fill="#f09a2c" stroke="#222" /></svg>
            LOGO! 8.FS4
          </StatusCell>
          <StatusCell $w={43}>100%</StatusCell>
          <StatusCell $w={34}>S. 1</StatusCell>
        </StatusBar>
      </AppWindow>
      <Taskbar>
        <TaskButton $w={45} aria-label="Start">
          <svg width="16" height="16" viewBox="0 0 16 16"><path d="M0 2.200l6.700-1v6.400H0zM7.400 1.100L16 0v7.600H7.400zM0 8.300h6.700v6.400L0 13.800zM7.400 8.300H16V16l-8.600-1.200z" fill="#fff" /></svg>
        </TaskButton>
        <SearchBox>
          <svg width="18" height="18" viewBox="0 0 18 18" fill="none"><circle cx="11" cy="6.500" r="5" stroke="#222" strokeWidth="1.300" /><path d="M7.500 10l-5.500 6" stroke="#222" strokeWidth="1.300" /></svg>
          <input aria-label="Ara" placeholder="Aramak için buraya yazın" />
        </SearchBox>
        <TaskButton aria-label="Cortana"><svg width="16" height="16" fill="none"><circle cx="8" cy="8" r="6" stroke="#f0f0ec" strokeWidth="2" /></svg></TaskButton>
        <TaskButton $w={42} aria-label="Task View">
          <svg width="16" height="16" fill="none"><path d="M1.500 4.500h9v6h-9zM1.500 1v1.500h9V1M1.500 15v-2h9v2M14.500 1v4M14.500 8v7" stroke="#eee" strokeWidth="1.300" /><circle cx="14.500" cy="6" r="1.200" fill="#eee" /></svg>
        </TaskButton>
        <TaskDivider $w={22} />
        <TaskButton aria-label="Edge">
          <svg width="24" height="24" viewBox="0 0 24 24">
            <circle cx="12" cy="12" r="11" fill="#1b74c9" />
            <path d="M2 9C4 2 12-1 18 3c4 2 6 7 4.500 11-2 2.500-6 2-8 0 1-1 1-3-.5-5C11 6 5 6 2 9z" fill="#48c6a0" />
            <path d="M2 9c3-5 9-6 12-3-4-1-8 1-9 6-.7 4 2 8 6 10C4 22-1 16 2 9z" fill="#2ba3e4" />
            <path d="M10 9c3 0 4 2 4 4 1.500 2.500 5 3 8 1-1 5-6 8-10 7-5-2-6-9-2-12z" fill="#12519f" />
          </svg>
        </TaskButton>
        <TaskButton aria-label="Microsoft Store">
          <svg width="22" height="24" viewBox="0 0 22 24" fill="none">
            <path d="M7 6c0-5 8-5 8 0" stroke="#d5d5d0" strokeWidth="1.500" />
            <path d="M0 6h22v15a2 2 0 0 1-2 2H2a2 2 0 0 1-2-2z" fill="#fbfbf8" />
            <path d="M5.500 9h5v5h-5z" fill="#e8502c" /><path d="M11.500 9h5v5h-5z" fill="#7bb42c" />
            <path d="M5.500 15h5v5h-5z" fill="#2c9fe0" /><path d="M11.500 15h5v5h-5z" fill="#f5b822" />
          </svg>
        </TaskButton>
        <TaskButton $w={47} aria-label="Mail">
          <svg width="38" height="28" viewBox="0 0 38 28" fill="none">
            <path d="M6 9l12-6 12 6v11H6z" fill="#fbfbf8" />
            <path d="M6 9h24L18 15z" fill="#2a2a20" />
            <circle cx="30" cy="20" r="7" fill="#3b3b34" stroke="#aaa" />
            <text x="30" y="24" textAnchor="middle" fill="#fff" fontSize="10" fontWeight="700">11</text>
          </svg>
        </TaskButton>
        <TaskButton $w={45} $open $on aria-label="LOGO!Soft Comfort"><LogoMark>LOGO<em>V8</em></LogoMark></TaskButton>
        <TaskButton $open aria-label="Recorder"><CameraFrame /></TaskButton>
        <TaskButton $open aria-label="Recorder, recording"><CameraFrame rec /></TaskButton>
        <Grow />
        <TaskDivider $w={14} />
        <TaskLabel $w={69} $size={11}>&nbsp;Bu bilgisayar</TaskLabel>
        <TaskButton $w={16} aria-label="More">
          <svg width="9" height="24" viewBox="0 0 9 24" fill="none"><path d="M1 2l2.500 2.500L1 7M5 2l2.500 2.500L5 7" stroke="#fff" strokeWidth="1.300" /></svg>
        </TaskButton>
        <Gap />
        <TaskButton $w={36} aria-label="Weather">
          <svg width="22" height="20" viewBox="0 0 22 20">
            <path d="M9 1c-2 5 1 9 6 9-2 3-8 4-11 0l-3 1C2 6 4 2 9 1z" fill="#f6bd3a" />
            <path d="M5 18c-5-1-3-7 1-6 2-5 9-4 10 0 6-1 6 6 1 6z" fill="#dfe8f8" />
          </svg>
        </TaskButton>
        <TaskLabel $w={39} $size={13}>22°C</TaskLabel>
        {tray.map((t) => <TaskButton key={t.label} $w={t.w} aria-label={t.label}><Svg>{t.icon}</Svg></TaskButton>)}
        <Clock><span>23:58</span><span>12.06.2022</span></Clock>
        <TaskButton $w={42} aria-label="Notifications">
          <svg width="32" height="28" viewBox="0 0 32 28" fill="none">
            <path d="M2 5h15v11H7l-3 3v-3H2z" fill="#f8f8f4" />
            <path d="M5 8.500h9M5 11.500h9" stroke="#2a2a20" strokeWidth="1.200" />
            <circle cx="19" cy="19.500" r="8" fill="#3b3b34" stroke="#999" />
            <text x="19" y="23.500" textAnchor="middle" fill="#fff" fontSize="10" fontWeight="700">24</text>
          </svg>
        </TaskButton>
        <ShowDesktop aria-label="Show desktop" />
      </Taskbar>
    </Screen>
  );
}
